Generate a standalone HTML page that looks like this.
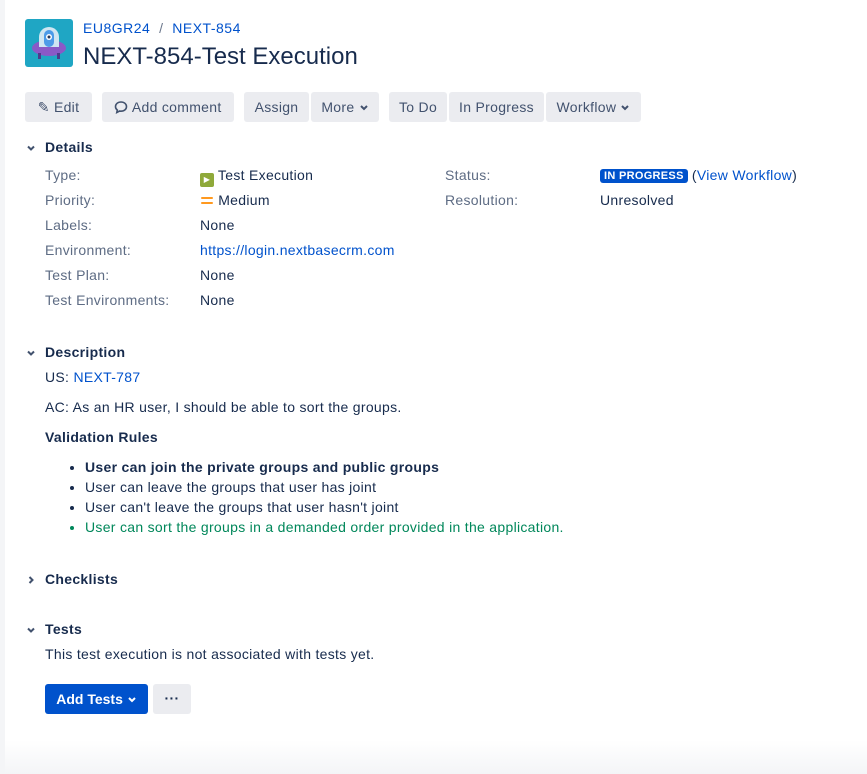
<!DOCTYPE html>
<html><head><style>
*{box-sizing:border-box}
body{margin:0;width:867px;height:774px;overflow:hidden;background:#fff;font-family:"Liberation Sans",sans-serif;color:#172b4d;font-size:14px;position:relative;letter-spacing:0.3px}
.strip{position:absolute;left:0;top:0;width:5px;height:774px;background:#f4f5f7}
.bot{position:absolute;left:5px;right:0;top:740px;height:34px;background:linear-gradient(#fff,#f4f5f7)}
a{color:#0052cc;text-decoration:none}
.abs{position:absolute}
.btn{position:absolute;top:92px;height:30px;background:#ebecf0;border-radius:3px;font-size:14px;line-height:30px;text-align:center;color:#42526e}
.lbl{position:absolute;left:45px;color:#5e6c84}
.val{position:absolute;left:200px}
.sec{position:absolute;left:45px;font-weight:bold;font-size:14px}
.chev{position:absolute;left:-20px;top:3px}
li{margin:0;line-height:20px}
</style></head><body>
<div class="strip"></div><div class="bot"></div>
<svg class="abs" style="left:25px;top:19px" width="48" height="48" viewBox="0 0 48 48"><rect width="48" height="48" rx="3" fill="#1fa6c4"/><ellipse cx="24" cy="29" rx="17" ry="8" fill="#8a59c7"/><rect x="13" y="34" width="3" height="6" fill="#4e3a8c"/><rect x="32" y="34" width="3" height="6" fill="#4e3a8c"/><path d="M14 28 V18 a10 10 0 0 1 20 0 V28z" fill="#cfe6f2"/><rect x="19" y="11" width="10" height="17" rx="5" fill="#4c9be8"/><circle cx="24" cy="18" r="3" fill="#fff"/><circle cx="24" cy="18" r="1.5" fill="#253858"/></svg>
<div class="abs" style="left:83px;top:20px;font-size:14px;letter-spacing:0.5px"><a>EU8GR24</a> <span style="color:#6b778c">&nbsp;/&nbsp;</span> <a>NEXT-854</a></div>
<div class="abs" style="left:83px;top:43px;font-size:24px;font-weight:500;letter-spacing:0">NEXT-854-Test Execution</div>
<div class="btn" style="left:25px;width:67px">✎ Edit</div>
<div class="btn" style="left:102px;width:132px"><svg width="14" height="14" viewBox="0 0 14 14" style="vertical-align:-2px"><path d="M7 2C3.8 2 1.5 4 1.5 6.6c0 1.4.7 2.6 1.8 3.4L2.8 12.5 5.6 11c.5.1.9.2 1.4.2 3.2 0 5.5-2 5.5-4.6S10.2 2 7 2z" fill="none" stroke="#42526e" stroke-width="1.6"/></svg> Add comment</div>
<div class="btn" style="left:244px;width:65px">Assign</div>
<div class="btn" style="left:311px;width:68px">More <svg width="10" height="8" viewBox="0 0 10 8"><path d="M2 2l3 3 3-3" fill="none" stroke="#42526e" stroke-width="2"/></svg></div>
<div class="btn" style="left:389px;width:58px">To Do</div>
<div class="btn" style="left:449px;width:95px">In Progress</div>
<div class="btn" style="left:546px;width:95px">Workflow <svg width="10" height="8" viewBox="0 0 10 8"><path d="M2 2l3 3 3-3" fill="none" stroke="#42526e" stroke-width="2"/></svg></div>
<div class="sec" style="top:139px"><svg class="chev" width="12" height="12" viewBox="0 0 12 12"><path d="M3 4.5l3 3 3-3" fill="none" stroke="#42526e" stroke-width="2"/></svg>Details</div>
<div class="lbl" style="top:167px">Type:</div><div class="val" style="top:167px"><span style="display:inline-block;width:14px;height:14px;background:#8fa93a;border-radius:2px;vertical-align:-2px;color:#fff;font-size:8px;text-align:center;line-height:14px">▶</span> Test Execution</div>
<div class="lbl" style="top:192px">Priority:</div><div class="val" style="top:192px"><svg width="14" height="14" viewBox="0 0 14 14" style="vertical-align:-2px"><rect x="1" y="4" width="12" height="2" rx="1" fill="#ff991f"/><rect x="1" y="9" width="12" height="2" rx="1" fill="#ff991f"/></svg> Medium</div>
<div class="lbl" style="top:217px">Labels:</div><div class="val" style="top:217px">None</div>
<div class="lbl" style="top:242px">Environment:</div><div class="val" style="top:242px"><a>https://login.nextbasecrm.com</a></div>
<div class="lbl" style="top:267px">Test Plan:</div><div class="val" style="top:267px">None</div>
<div class="lbl" style="top:292px">Test Environments:</div><div class="val" style="top:292px">None</div>
<div class="lbl" style="left:445px;top:167px">Status:</div>
<div class="abs" style="left:600px;top:167px"><span style="background:#0052cc;color:#fff;font-size:11px;font-weight:bold;padding:1px 4px;border-radius:3px;vertical-align:1px;letter-spacing:0.3px">IN PROGRESS</span> (<a>View Workflow</a>)</div>
<div class="lbl" style="left:445px;top:192px">Resolution:</div>
<div class="abs" style="left:600px;top:192px">Unresolved</div>
<div class="sec" style="top:344px"><svg class="chev" width="12" height="12" viewBox="0 0 12 12"><path d="M3 4.5l3 3 3-3" fill="none" stroke="#42526e" stroke-width="2"/></svg>Description</div>
<div class="abs" style="left:45px;top:369px">US: <a>NEXT-787</a></div>
<div class="abs" style="left:45px;top:399px">AC: As an HR user, I should be able to sort the groups.</div>
<div class="abs" style="left:45px;top:429px;font-weight:bold">Validation Rules</div>
<ul class="abs" style="left:45px;top:457px;margin:0;padding-left:40px;width:700px">
<li style="font-weight:bold">User can join the private groups and public groups</li>
<li>User can leave the groups that user has joint</li>
<li>User can't leave the groups that user hasn't joint</li>
<li style="color:#00875a">User can sort the groups in a demanded order provided in the application.</li>
</ul>
<div class="sec" style="top:571px"><svg class="chev" width="12" height="12" viewBox="0 0 12 12"><path d="M4.5 3l3 3-3 3" fill="none" stroke="#42526e" stroke-width="2"/></svg>Checklists</div>
<div class="sec" style="top:621px"><svg class="chev" width="12" height="12" viewBox="0 0 12 12"><path d="M3 4.5l3 3 3-3" fill="none" stroke="#42526e" stroke-width="2"/></svg>Tests</div>
<div class="abs" style="left:45px;top:646px">This test execution is not associated with tests yet.</div>
<div class="abs" style="left:45px;top:684px;width:103px;height:30px;background:#0052cc;color:#fff;border-radius:3px;line-height:30px;text-align:center;font-weight:bold;letter-spacing:0">Add Tests <svg width="10" height="8" viewBox="0 0 10 8"><path d="M2 2l3 3 3-3" fill="none" stroke="#fff" stroke-width="2"/></svg></div>
<div class="abs" style="left:153px;top:684px;width:38px;height:30px;background:#ebecf0;border-radius:3px;line-height:28px;text-align:center;font-weight:bold">···</div>
</body></html>
